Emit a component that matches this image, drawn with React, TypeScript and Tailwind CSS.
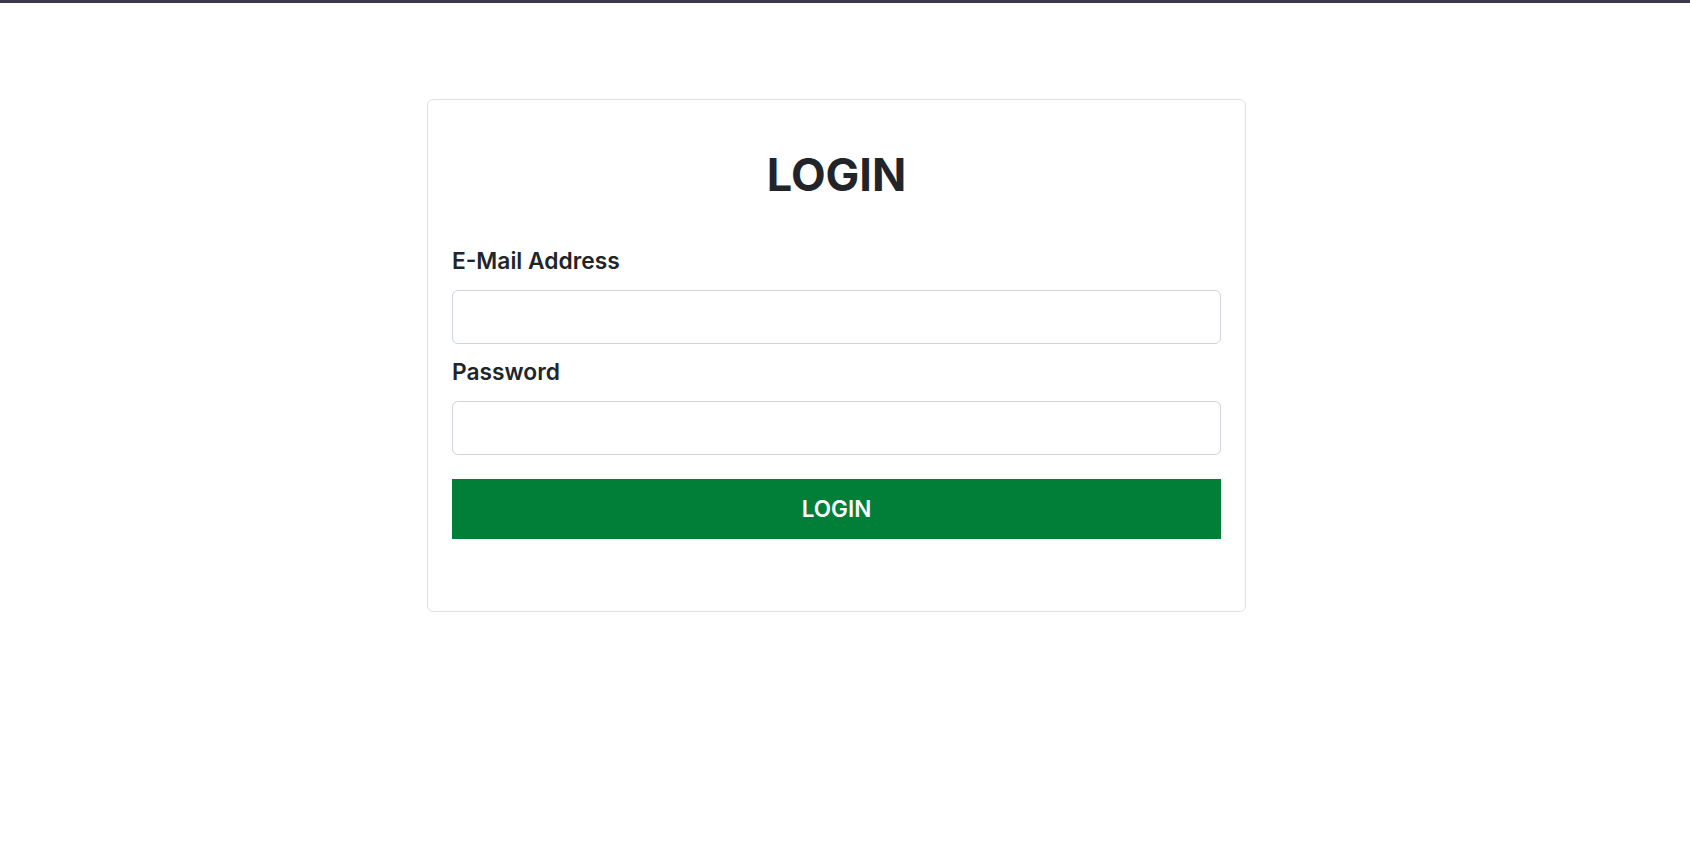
import React from "react";

export default function App() {
  return (
    <div className="min-h-[865px] w-full bg-white" style={{ fontFamily: "Inter, 'Noto Sans', sans-serif" }}>
      <div className="h-[3px] w-full bg-[#3b3b47]" />
      <div className="ml-[427px] mt-[96px] w-[819px] rounded-md border border-[#dee2e6] px-6 pt-[48px] pb-[72px] text-[#212529]">
        <h1 className="text-center text-[45px] font-bold leading-[1.2]">LOGIN</h1>
        <form className="flex flex-col">
          <label className="mt-[44px] block text-[22.75px] font-semibold leading-[30px]">E-Mail Address</label>
          <input type="email" className="mt-[14px] h-[54px] w-full rounded-md border border-[#ced4da] px-3 outline-none" />
          <label className="mt-[13px] block text-[22.75px] font-semibold leading-[30px]">Password</label>
          <input type="password" className="mt-[14px] h-[54px] w-full rounded-md border border-[#ced4da] px-3 outline-none" />
          <button type="button" className="mt-[24px] h-[60px] w-full bg-[#017e37] text-[22.5px] font-semibold text-white">
            LOGIN
          </button>
        </form>
      </div>
    </div>
  );
}
